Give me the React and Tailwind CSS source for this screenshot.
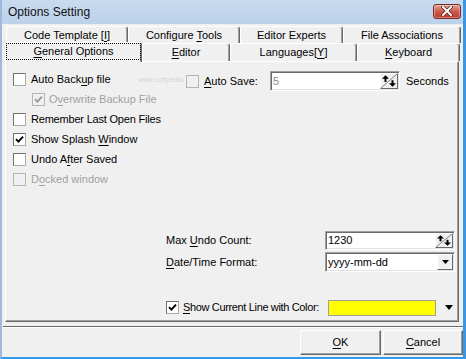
import React from 'react'

function Check({ checked, disabled }) {
  return (
    <span
      className={`w-[13px] h-[13px] shrink-0 flex items-center justify-center border ${
        disabled
          ? 'border-[#b4b4b4] bg-[#f0f0f0]'
          : 'border-t-[#707070] border-l-[#707070] border-r-[#a8a8a8] border-b-[#a8a8a8] bg-white'
      }`}
    >
      {checked && (
        <svg width="9" height="9" viewBox="0 0 9 9">
          <path d="M1 4.2 L3.4 6.6 L8 1.6" fill="none" stroke={disabled ? '#9a9a9a' : '#000'} strokeWidth="1.9" />
        </svg>
      )}
    </span>
  )
}

function U({ children }) {
  return <span className="underline underline-offset-[2px]">{children}</span>
}

function Tab({ w, children, selected }) {
  return (
    <div
      className={`${w} flex items-center justify-center rounded-t-[3px] border-t border-l border-white border-r border-r-[#696969] shadow-[inset_-1px_0_0_#a0a0a0] bg-[#f0f0f0] ${
        selected ? 'h-[20px] -mb-[1px] relative z-10 pb-[2px]' : 'h-full'
      }`}
    >
      {selected ? (
        <div className="w-full h-full flex items-center justify-center outline-1 outline-dotted outline-black -outline-offset-1">
          <span className="whitespace-pre">{children}</span>
        </div>
      ) : (
        <span className="whitespace-pre">{children}</span>
      )}
    </div>
  )
}

function Spin() {
  return (
    <div className="w-[18px] h-full shrink-0 border border-t-white border-l-white border-r-[#696969] border-b-[#696969] bg-[#f0f0f0]">
      <svg width="16" height="100%" viewBox="0 0 16 16" preserveAspectRatio="none" className="block h-full">
        <line x1="0" y1="16" x2="16" y2="0" stroke="#7a7a7a" strokeWidth="1" />
        <path d="M4.5 1.5 L1 5.5 L3.5 5.5 L3.5 9 L5.5 9 L5.5 5.5 L8 5.5 Z" fill="#000" />
        <path d="M11.5 14.5 L8 10.5 L10.5 10.5 L10.5 7 L12.5 7 L12.5 10.5 L15 10.5 Z" fill="#000" />
      </svg>
    </div>
  )
}

function Field({ w, h, children, right, muted }) {
  return (
    <div
      className={`${w} ${h} flex items-stretch bg-white border border-t-[#a0a0a0] border-l-[#a0a0a0] border-r-white border-b-white shadow-[inset_1px_1px_0_#696969,inset_-1px_-1px_0_#e3e3e3] p-[1px]`}
    >
      <div className={`flex-1 flex items-center pl-[1px] ${muted ? 'text-[#8c8c8c]' : 'text-black'}`}>{children}</div>
      {right}
    </div>
  )
}

function DropBtn() {
  return (
    <div className="w-[16px] shrink-0 flex items-center justify-center border border-t-white border-l-white border-r-[#696969] border-b-[#696969] bg-[#f0f0f0]">
      <svg width="7" height="4" viewBox="0 0 7 4">
        <path d="M0 0 H7 L3.5 4 Z" fill="#000" />
      </svg>
    </div>
  )
}

function Btn({ w, children }) {
  return (
    <button className={`${w} h-[25px] flex items-center justify-center bg-[#f0f0f0] border border-t-white border-l-white border-r-[#696969] border-b-[#696969] shadow-[inset_-1px_-1px_0_#a0a0a0]`}>
      <span>{children}</span>
    </button>
  )
}

export default function App() {
  return (
    <div className="w-[466px] h-[359px] flex flex-col bg-[#f0f0f0] border-l-[2px] border-l-[#9db9dc] border-r-[3px] border-r-[#3a97e4] border-b-[2px] border-b-[#3a97e4] overflow-hidden relative font-['Liberation_Sans',Arial,sans-serif] text-[11px] text-black leading-none select-none">
      <div className="h-[24px] shrink-0 flex items-center justify-between pl-[6px] pr-[2px] bg-gradient-to-b from-[#c8dbf0] to-[#bcd1ea]">
        <span className="text-[12px] text-[#111]">Options Setting</span>
        <div className="w-[28px] h-[15px] mt-[-2px] rounded-[3px] border border-[#7a2a24] bg-gradient-to-b from-[#e3a394] via-[#cc5a4c] to-[#b8392c] flex items-center justify-center shadow-[inset_0_0_0_1px_rgba(255,255,255,0.35)]">
          <svg width="12" height="10" viewBox="0 0 12 10">
            <path d="M2 1 L10 9 M10 1 L2 9" stroke="#5a1a14" strokeWidth="3.4" strokeLinecap="square" />
            <path d="M2 1 L10 9 M10 1 L2 9" stroke="#fff" strokeWidth="2" strokeLinecap="square" />
          </svg>
        </div>
      </div>

      <div className="mt-[2px] ml-[4px] h-[17px] flex shrink-0">
        <Tab w="w-[122px]">Code Template [<U>I</U>]</Tab>
        <Tab w="w-[112px]">Configure <U>T</U>ools</Tab>
        <Tab w="w-[103px]">Editor Experts</Tab>
        <Tab w="w-[118px]">File Associations</Tab>
      </div>
      <div className="ml-[3px] h-[18px] flex items-end shrink-0">
        <Tab w="w-[137px]" selected>
          <U>G</U>eneral Options
        </Tab>
        <Tab w="w-[88px]">
          <U>E</U>ditor
        </Tab>
        <Tab w="w-[127px]">
          Languages[<U>Y</U>]
        </Tab>
        <Tab w="w-[103px]">
          <U>K</U>eyboard
        </Tab>
      </div>

      <div className="ml-[3px] w-[454px] h-[261px] shrink-0 border-t border-l border-white border-r border-r-[#696969] border-b border-b-[#696969] shadow-[inset_-1px_-1px_0_#a0a0a0] pl-[7px] pt-[7px] flex flex-col">
        <div className="flex">
          <div className="w-[125px] flex flex-col">
            <div className="h-[20px] flex items-center gap-[5px]">
              <Check />
              <span className="whitespace-nowrap">Auto Back<U>u</U>p file</span>
            </div>
            <div className="h-[20px] flex items-center gap-[4px] pl-[19px] text-[#a0a0a0]">
              <Check checked disabled />
              <span className="whitespace-nowrap">O<U>v</U>erwrite Backup File</span>
            </div>
            <div className="h-[20px] flex items-center gap-[5px]">
              <Check />
              <span className="whitespace-nowrap tracking-[-0.2px]">Remember Last Open Files</span>
            </div>
            <div className="h-[20px] flex items-center gap-[5px]">
              <Check checked />
              <span className="whitespace-nowrap">Show Splash <U>W</U>indow</span>
            </div>
            <div className="h-[20px] flex items-center gap-[5px]">
              <Check />
              <span className="whitespace-nowrap">Undo A<U>f</U>ter Saved</span>
            </div>
            <div className="h-[20px] flex items-center gap-[5px] text-[#a0a0a0]">
              <Check disabled />
              <span className="whitespace-nowrap">D<U>o</U>cked window</span>
            </div>
          </div>
          <div className="w-[48px] h-[20px] flex items-center text-[7px] text-[#d6d6d6] whitespace-nowrap">
            www.softpedia
          </div>
          <div className="mt-[2px] h-[20px] flex items-center">
            <Check disabled />
            <span className="w-[71px] pl-[5px]">
              <U>A</U>uto Save:
            </span>
            <Field w="w-[130px]" h="h-[20px]" muted right={<Spin />}>
              5
            </Field>
            <span className="ml-[6px]">Seconds</span>
          </div>
        </div>

        <div className="mt-[42px] ml-[153px] flex flex-col">
          <div className="h-[19px] flex items-center">
            <span className="w-[159px]">
              Max <U>U</U>ndo Count:
            </span>
            <Field w="w-[130px]" h="h-[19px]" right={<Spin />}>
              1230
            </Field>
          </div>
          <div className="mt-[2px] h-[20px] flex items-center">
            <span className="w-[159px]">
              <U>D</U>ate/Time Format:
            </span>
            <Field w="w-[130px]" h="h-[20px]" right={<DropBtn />}>
              yyyy-mm-dd
            </Field>
          </div>
          <div className="mt-[27px] h-[17px] flex items-center">
            <Check checked />
            <span className="w-[149px] pl-[4px] whitespace-nowrap tracking-[-0.35px]">
              <U>S</U>how Current Line with Color:
            </span>
            <div className="w-[108px] h-[16px] bg-[#ffff00] border border-[#a0a0a0]" />
            <svg width="8" height="5" viewBox="0 0 8 5" className="ml-[9px]">
              <path d="M0 0 H8 L4 5 Z" fill="#000" />
            </svg>
          </div>
        </div>
      </div>

      <div className="mt-[4px] ml-[1px] h-[1px] bg-[#696969] shrink-0" />
      <div className="ml-[1px] h-[1px] bg-white shrink-0" />
      <div className="mt-[2px] flex justify-end gap-[2px] shrink-0">
        <Btn w="w-[81px]">
          <U>O</U>K
        </Btn>
        <Btn w="w-[80px]">
          <U>C</U>ancel
        </Btn>
      </div>
    </div>
  )
}
